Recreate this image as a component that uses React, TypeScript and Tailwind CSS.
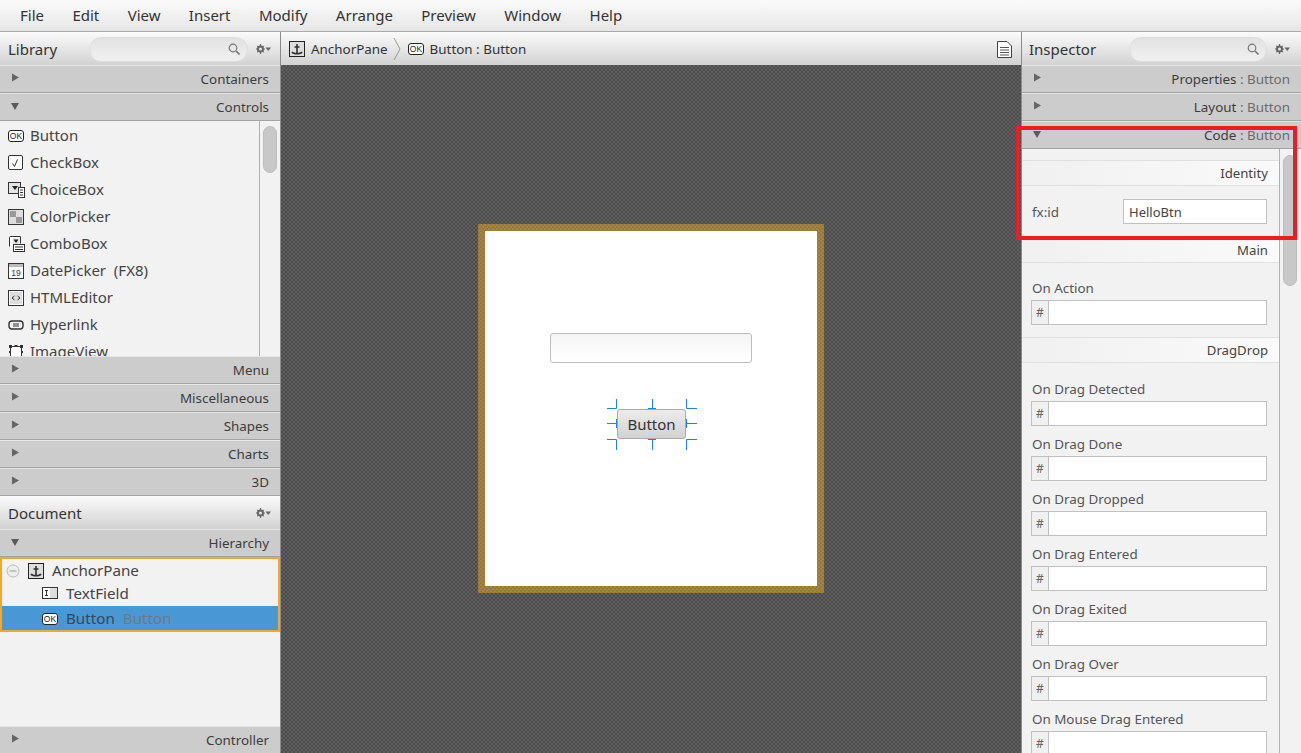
import React from "react";

const FONT = "font-['Noto_Sans','Open_Sans',sans-serif]";

function Tri({ open }: { open?: boolean }) {
  return open ? (
    <svg width="12" height="12" viewBox="0 0 12 12" className="absolute left-[10px] top-[6px]"><path d="M1 3h8L5 10z" fill="#5a5a5a" /></svg>
  ) : (
    <svg width="12" height="12" viewBox="0 0 12 12" className="absolute left-[10px] top-[7px]"><path d="M2 0.5l7 4-7 4z" fill="#666" /></svg>
  );
}

function Section({ label, sub, open }: { label: string; sub?: string; open?: boolean }) {
  return (
    <div className="relative flex h-[28px] shrink-0 items-center justify-end border-t border-b border-t-[#e6e6e6] border-b-[#a3a3a3] bg-[#cccccc] pr-[11px] pt-[2px] text-[13.400px] text-[#3c3c3c]">
      <Tri open={open} />
      <span className="leading-none">
        {label}
        {sub && <span className="text-[#6b6b6b]"> : {sub}</span>}
      </span>
    </div>
  );
}

function Gear() {
  return (
    <svg width="15" height="12" viewBox="0 0 15 12" className="shrink-0">
      <circle cx="4.500" cy="6" r="2.500" fill="none" stroke="#666" strokeWidth="2" />
      <path d="M4.500 1v2M4.500 9v2M0 6h2M7 6h2M1.300 2.800l1.300 1.300M6.400 7.900l1.300 1.300M1.300 9.200l1.300-1.300M6.400 4.100l1.300-1.300" stroke="#666" strokeWidth="1.200" />
      <path d="M9.500 4.500h5.500L12.200 8z" fill="#666" />
    </svg>
  );
}

function SearchBox({ w }: { w: string }) {
  return (
    <div className={`relative h-[25px] rounded-full border border-[#dedede] bg-gradient-to-b from-[#e2e2e2] to-[#f0f0f0] ${w}`}>
      <svg width="12" height="12" viewBox="0 0 12 12" className="absolute right-[7px] top-[5px]">
        <circle cx="5" cy="5" r="3.800" fill="none" stroke="#777" strokeWidth="1.200" />
        <path d="M8 8l3.500 3.500" stroke="#777" strokeWidth="1.600" />
      </svg>
    </div>
  );
}

function OkIcon() {
  return (
    <svg width="16" height="12" viewBox="0 0 16 12" className="shrink-0">
      <rect x=".5" y=".5" width="15" height="11" rx="2.500" fill="#fff" stroke="#222" />
      <text x="8" y="9" textAnchor="middle" fontSize="8.500" fill="#222" fontFamily="Liberation Sans, sans-serif">OK</text>
    </svg>
  );
}

function AnchorIcon() {
  return (
    <svg width="16" height="16" viewBox="0 0 16 16" className="shrink-0">
      <rect x=".5" y=".5" width="15" height="15" fill="#dedede" stroke="#222" />
      <path d="M8 3v9M5.500 6h5M3 11c1 1.500 3 1.700 5 1.700s4-.2 5-1.700" fill="none" stroke="#333" strokeWidth="1.600" />
    </svg>
  );
}

function CheckIcon() {
  return (
    <svg width="15" height="15" viewBox="0 0 15 15"><rect x=".5" y=".5" width="14" height="14" rx="1.500" fill="#fff" stroke="#333" /><path d="M4.500 8.500l2 3 3-7" fill="none" stroke="#333" /></svg>
  );
}
function ChoiceIcon() {
  return (
    <svg width="17" height="16" viewBox="0 0 17 16"><rect x=".5" y=".5" width="12" height="11" fill="#e4e4e4" stroke="#333" /><path d="M4 4h6L7 8z" fill="#222" /><rect x="10.500" y="5.500" width="6" height="10" fill="#fff" stroke="#333" /><path d="M12 8h3M12 10.500h3M12 13h3" stroke="#333" /></svg>
  );
}
function ColorIcon() {
  return (
    <svg width="16" height="16" viewBox="0 0 16 16"><rect x=".5" y=".5" width="15" height="15" fill="#ddd" stroke="#333" /><rect x="2" y="2" width="6" height="6" fill="#999" /><rect x="8" y="8" width="6" height="6" fill="#999" /></svg>
  );
}
function ComboIcon() {
  return (
    <svg width="17" height="16" viewBox="0 0 17 16"><path d="M1.500 10.500V1.500a1 1 0 011-1h10v7" fill="#fff" stroke="#333" /><rect x="4.500" y="2.500" width="7" height="5.500" fill="#e4e4e4" /><path d="M5.500 3.500h5L8 7z" fill="#222" /><rect x="5.500" y="8.500" width="11" height="7" fill="#fff" stroke="#333" /><path d="M7 11h8M7 13.500h8" stroke="#333" /></svg>
  );
}
function DateIcon() {
  return (
    <svg width="16" height="16" viewBox="0 0 16 16"><rect x=".5" y=".5" width="15" height="15" fill="#fff" stroke="#333" /><rect x="1" y="1" width="14" height="3" fill="#bbb" /><text x="8" y="13" textAnchor="middle" fontSize="8.500" fill="#333" fontFamily="Liberation Sans, sans-serif">19</text></svg>
  );
}
function HtmlIcon() {
  return (
    <svg width="16" height="16" viewBox="0 0 16 16"><rect x=".5" y=".5" width="15" height="15" fill="#fff" stroke="#333" /><rect x="2" y="2" width="12" height="12" fill="#ddd" /><path d="M6.500 6L4 8l2.500 2M9.500 6L12 8l-2.500 2" fill="none" stroke="#333" /></svg>
  );
}
function LinkIcon() {
  return (
    <svg width="16" height="10" viewBox="0 0 16 10"><rect x="1" y="1" width="14" height="8" rx="3" fill="none" stroke="#333" strokeWidth="1.400" /><path d="M5 5h6" stroke="#333" strokeWidth="3" /><path d="M5 5h6" stroke="#eee" strokeWidth="1" /></svg>
  );
}
function ImageIcon() {
  return (
    <svg width="16" height="16" viewBox="0 0 16 16"><rect x="2.500" y="2.500" width="11" height="11" fill="#fff" stroke="#333" /><path d="M1 1h3v3H1zM6.500 1h3v2h-3zM12 1h3v3h-3zM1 7h2v2H1zM13 7h2v2h-2z" fill="#333" /></svg>
  );
}
function FieldIcon() {
  return (
    <svg width="16" height="12" viewBox="0 0 16 12" className="shrink-0"><rect x=".5" y=".5" width="15" height="11" fill="#ddd" stroke="#333" /><rect x="1" y="1" width="7" height="10" fill="#fff" /><path d="M3 3.500h3M3 8.500h3M4.500 3.500v5" stroke="#333" /></svg>
  );
}
function DocIcon() {
  return (
    <svg width="15" height="17" viewBox="0 0 15 17"><path d="M.5.500h9.500l4.500 4.500v11.500H.5z" fill="#fff" stroke="#444" /><path d="M3 6.500h9M3 9h9M3 11.500h9M3 14h9" stroke="#555" /></svg>
  );
}

const library: [string, React.ReactNode][] = [
  ["Button", <OkIcon />],
  ["CheckBox", <CheckIcon />],
  ["ChoiceBox", <ChoiceIcon />],
  ["ColorPicker", <ColorIcon />],
  ["ComboBox", <ComboIcon />],
  ["DatePicker  (FX8)", <DateIcon />],
  ["HTMLEditor", <HtmlIcon />],
  ["Hyperlink", <LinkIcon />],
  ["ImageView", <ImageIcon />],
];

function PanelHeader({ title, pad, children }: { title: string; pad: string; children?: React.ReactNode }) {
  return (
    <div className={`flex h-[33px] shrink-0 items-center bg-gradient-to-b from-[#fbfbfb] to-[#d2d2d2] pt-[1px] text-[15px] text-[#333] ${pad}`}>
      <span className="flex-1 leading-none">{title}</span>
      {children}
    </div>
  );
}

function Band({ label }: { label: string }) {
  return (
    <div className="flex h-[26px] items-center justify-end border-y border-[#e0e0e0] bg-gradient-to-r from-[#f0f0f0] to-[#fafafa] pr-[11px] pt-[2px] text-[13.200px] text-[#444]">
      {label}
    </div>
  );
}

function CodeField({ label }: { label: string }) {
  return (
    <div className="mb-[8px] pl-[9px]">
      <div className="h-[20px] pl-[1px] whitespace-nowrap text-[13.400px] leading-[20px] text-[#555]">{label}</div>
      <div className="mt-[2px] flex h-[25px] w-[236px] border border-[#c0c0c0] bg-white">
        <div className="flex w-[17px] items-center justify-center border-r border-[#c0c0c0] bg-[#f0f0f0] text-[12px] text-[#666]">#</div>
      </div>
    </div>
  );
}

function Handles() {
  return (
    <svg width="90" height="51" viewBox="0 0 90 51" className="absolute left-[-11px] top-[-11px]">
      <path
        d="M0 9.500h9.500V0M41 9.500h8M45.500 0v9.500M79.500 0v9.500H90M0 24.500h9.500M9.500 20v9M79.500 20v9M79.500 24.500H90M0 40.500h9.500V51M41 40.500h8M45.500 40.500V51M90 40.500H79.500V51"
        fill="none"
        stroke="#1f7ff0"
      />
    </svg>
  );
}

export default function App() {
  return (
    <div className={`relative flex h-[753px] w-[1301px] flex-col overflow-hidden bg-[#f2f2f2] ${FONT}`}>
      <div className="flex h-[32px] shrink-0 items-center gap-[28.400px] border-b border-[#a8a8a8] bg-gradient-to-b from-[#fbfbfb] to-[#e6e6e6] pl-[20px] text-[15px] text-[#333]">
        {["File", "Edit", "View", "Insert", "Modify", "Arrange", "Preview", "Window", "Help"].map((m) => (
          <span key={m}>{m}</span>
        ))}
      </div>
      <div className="flex min-h-0 flex-1">
        {/* left */}
        <div className="flex w-[281px] shrink-0 flex-col border-r border-[#8a8a8a]">
          <PanelHeader title="Library" pad="pl-[8px] pr-[9px]">
            <SearchBox w="w-[159px] mr-[8px]" />
            <Gear />
          </PanelHeader>
          <Section label="Containers" />
          <Section label="Controls" open />
          <div className="flex h-[235px] shrink-0 overflow-hidden">
            <div className="min-w-0 flex-1 overflow-hidden pt-[1px]">
              {library.map(([name, icon]) => (
                <div key={name} className="flex h-[27px] items-center text-[15px] text-[#444]">
                  <span className="flex w-[30px] shrink-0 pl-[8px]">{icon}</span>
                  <span className="whitespace-pre">{name}</span>
                </div>
              ))}
            </div>
            <div className="w-[21px] shrink-0 border-l border-[#b0b0b0] pl-[3px] pt-[5px]">
              <div className="h-[47px] w-[14px] rounded-[7px] border border-[#bdbdbd] bg-[#c8c8c8]" />
            </div>
          </div>
          <Section label="Menu" />
          <Section label="Miscellaneous" />
          <Section label="Shapes" />
          <Section label="Charts" />
          <Section label="3D" />
          <PanelHeader title="Document" pad="pl-[8px] pr-[9px]">
            <Gear />
          </PanelHeader>
          <Section label="Hierarchy" open />
          <div className="flex min-h-0 flex-1 flex-col">
            <div className="border-2 border-[#f0a830] text-[15.200px]">
              <div className="flex h-[23px] items-center text-[#444]">
                <svg width="14" height="14" viewBox="0 0 14 14" className="ml-[4px] mr-[8px]">
                  <circle cx="7" cy="7" r="6" fill="#eee" stroke="#bbb" />
                  <path d="M3.500 7h7" stroke="#999" />
                </svg>
                <AnchorIcon />
                <span className="ml-[8px]">AnchorPane</span>
              </div>
              <div className="flex h-[24px] items-center pb-[2px] pl-[40px] text-[#444]">
                <FieldIcon />
                <span className="ml-[8px]">TextField</span>
              </div>
              <div className="flex h-[24px] items-center bg-[#4a98d3] pl-[40px] pt-[1px] text-[#3c4657]">
                <OkIcon />
                <span className="ml-[8px]">Button</span>
                <span className="ml-[8px] text-[#6f7a86]">Button</span>
              </div>
            </div>
            <div className="flex-1" />
            <div className="-mb-px">
              <Section label="Controller" />
            </div>
          </div>
        </div>

        {/* center */}
        <div className="flex min-w-0 flex-1 flex-col">
          <div className="flex h-[33px] shrink-0 items-center bg-gradient-to-b from-[#fbfbfb] to-[#d2d2d2] pl-[8px] pr-[9px] pt-[1px] text-[13.400px] text-[#333]">
            <AnchorIcon />
            <span className="ml-[6px]">AnchorPane</span>
            <svg width="9" height="24" viewBox="0 0 9 24" className="ml-[5px] mr-[6px]"><path d="M1 1l6 11-6 11" fill="none" stroke="#999" /></svg>
            <OkIcon />
            <span className="ml-[6px] flex-1">Button : Button</span>
            <DocIcon />
          </div>
          <div className="flex flex-1 items-center justify-center bg-[repeating-conic-gradient(#4c4c4c_0_25%,#5e5e5e_0_50%)] bg-[length:4px_4px]">
            <div className="mb-[1px] h-[369px] w-[346px] bg-[repeating-conic-gradient(#a5843f_0_25%,#98793c_0_50%)] bg-[length:4px_4px] p-[7px]">
              <div className="flex h-full flex-col items-center bg-white pt-[102px]">
                <div className="h-[30px] w-[202px] rounded-[3px] border border-[#bdbdbd] bg-gradient-to-b from-[#f4f4f4] to-white" />
                <div className="relative ml-[1px] mt-[46px] flex h-[30px] w-[69px] items-center justify-center rounded-[3px] border border-[#ababab] bg-gradient-to-b from-[#ececec] to-[#d2d2d2] text-[15px] text-[#333]">
                  Button
                  <Handles />
                </div>
              </div>
            </div>
          </div>
        </div>

        {/* right */}
        <div className="flex w-[280px] shrink-0 flex-col border-l border-[#8a8a8a]">
          <PanelHeader title="Inspector" pad="pl-[7px] pr-[11px]">
            <SearchBox w="w-[138px] mr-[8px]" />
            <Gear />
          </PanelHeader>
          <Section label="Properties" sub="Button" />
          <Section label="Layout" sub="Button" />
          <Section label="Code" sub="Button" open />
          <div className="flex min-h-0 flex-1">
            <div className="min-w-0 flex-1 overflow-hidden pt-[11px]">
              <Band label="Identity" />
              <div className="flex h-[51px] items-center pl-[10px] text-[13.400px] text-[#555]">
                <span className="w-[91px] pt-[1px]">fx:id</span>
                <div className="flex h-[25px] w-[144px] items-center border border-[#c0c0c0] bg-white pl-[5px] pt-[2px] text-[13px] text-[#444]">HelloBtn</div>
              </div>
              <Band label="Main" />
              <div className="h-[15px]" />
              <CodeField label="On Action" />
              <div className="h-[4px]" />
              <Band label="DragDrop" />
              <div className="h-[16px]" />
              {["On Drag Detected", "On Drag Done", "On Drag Dropped", "On Drag Entered", "On Drag Exited", "On Drag Over", "On Mouse Drag Entered"].map((l) => (
                <CodeField key={l} label={l} />
              ))}
            </div>
            <div className="w-[22px] shrink-0 border-l border-[#b0b0b0] pl-[3px] pt-[6px]">
              <div className="h-[131px] w-[14px] rounded-[7px] border border-[#bdbdbd] bg-[#c8c8c8]" />
            </div>
          </div>
        </div>
      </div>
      <div className="pointer-events-none absolute left-[1016px] top-[126px] h-[114px] w-[281px] border-[4px] border-[#ed1c24]" />
    </div>
  );
}
